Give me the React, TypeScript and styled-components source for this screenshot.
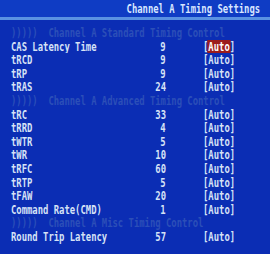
import React from "react";
import styled, { createGlobalStyle } from "styled-components";

const Global = createGlobalStyle`
  html, body { margin: 0; padding: 0; background: #0b2db4; }
`;

const Screen = styled.div`
  width: 270px;
  height: 254px;
  background: #0b2db4;
  font-family: "DejaVu Sans Mono", "Liberation Mono", monospace;
  font-weight: bold;
  font-size: 12.5px;
  color: #d6e2f6;
  display: flex;
  flex-direction: column;
  overflow: hidden;
`;

const Narrow = styled.span<{ $origin?: "left" | "right" }>`
  display: inline-block;
  white-space: pre;
  transform: scaleX(0.71);
  transform-origin: ${(p) => p.$origin ?? "left"} center;
`;

const TitleBar = styled.div`
  height: 17px;
  flex: none;
  background: #0f3cc4;
  display: flex;
  align-items: center;
  justify-content: flex-end;
  padding-right: 10px;
  color: #d8e6ff;
  line-height: 17px;
`;

const Rule = styled.div`
  height: 3px;
  flex: none;
  background: #5a92e2;
`;

const Body = styled.div`
  flex: 1;
  padding-top: 6px;
  padding-left: 11px;
  display: flex;
  flex-direction: column;
  background: #0b2db4;
`;

const Row = styled.div`
  height: 13.6px;
  line-height: 13.6px;
  display: grid;
  grid-template-columns: 119px 36px 1fr;
  overflow: hidden;
`;

const Section = styled.div`
  height: 13.6px;
  line-height: 13.6px;
  color: #2c4fb8;
  overflow: hidden;
`;

const Value = styled.span`
  display: flex;
  justify-content: flex-end;
`;

const Setting = styled.span`
  padding-left: 37px;
`;

const Hl = styled.span<{ $active?: boolean }>`
  display: inline-block;
  line-height: 13px;
  padding: 0 1.5px;
  margin: 0 -1.5px;
  background: ${(p) => (p.$active ? "#9c1c1c" : "transparent")};
  color: ${(p) => (p.$active ? "#ffffff" : "inherit")};
`;

type Item =
  | { kind: "section"; text: string }
  | { kind: "row"; label: string; value: string; active?: boolean };

const items: Item[] = [
  { kind: "section", text: ")))))  Channel A Standard Timing Control" },
  { kind: "row", label: "CAS Latency Time", value: "9", active: true },
  { kind: "row", label: "tRCD", value: "9" },
  { kind: "row", label: "tRP", value: "9" },
  { kind: "row", label: "tRAS", value: "24" },
  { kind: "section", text: ")))))  Channel A Advanced Timing Control" },
  { kind: "row", label: "tRC", value: "33" },
  { kind: "row", label: "tRRD", value: "4" },
  { kind: "row", label: "tWTR", value: "5" },
  { kind: "row", label: "tWR", value: "10" },
  { kind: "row", label: "tRFC", value: "60" },
  { kind: "row", label: "tRTP", value: "5" },
  { kind: "row", label: "tFAW", value: "20" },
  { kind: "row", label: "Command Rate(CMD)", value: "1" },
  { kind: "section", text: ")))))  Channel A Misc Timing Control" },
  { kind: "row", label: "Round Trip Latency", value: "57" },
];

export default function App() {
  return (
    <>
      <Global />
      <Screen>
        <TitleBar>
          <Narrow $origin="right">Channel A Timing Settings</Narrow>
        </TitleBar>
        <Rule />
        <Body>
          {items.map((it, i) =>
            it.kind === "section" ? (
              <Section key={i}>
                <Narrow>{it.text}</Narrow>
              </Section>
            ) : (
              <Row key={i}>
                <span>
                  <Narrow>{it.label}</Narrow>
                </span>
                <Value>
                  <Narrow $origin="right">{it.value}</Narrow>
                </Value>
                <Setting>
                  <Narrow>
                    [<Hl $active={it.active}>Auto</Hl>]
                  </Narrow>
                </Setting>
              </Row>
            )
          )}
        </Body>
      </Screen>
    </>
  );
}
